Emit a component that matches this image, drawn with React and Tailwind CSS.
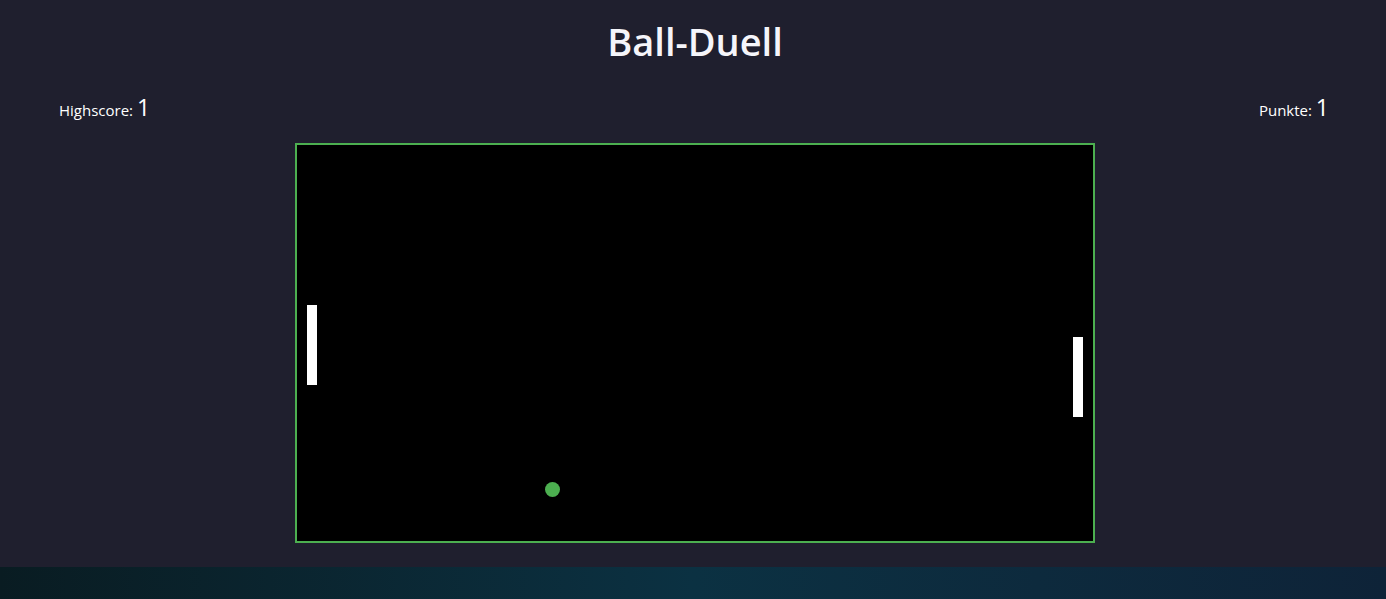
export default function App() {
  return (
    <div className="min-h-[599px] flex flex-col bg-[#1f1f2e]" style={{ fontFamily: '"Open Sans", "Noto Sans", sans-serif' }}>
      <div className="h-[567px] flex flex-col items-center bg-[#1f1f2e] text-white">
        <h1 className="mt-[15px] text-[38px] font-semibold leading-[52px] text-[#f5f5fa] ml-[4px]">Ball-Duell</h1>
        <div className="w-full flex justify-between items-baseline mt-[23px] pl-[59px] pr-[57px]">
          <div className="text-[15px]">Highscore: <span className="text-[23px]">1</span></div>
          <div className="text-[15px]">Punkte: <span className="text-[23px]">1</span></div>
        </div>
        <div className="mt-[18px] ml-[4px] w-[800px] h-[400px] border-2 border-[#4caf50] bg-black relative">
          <div className="absolute left-[10px] top-[160px] w-[10px] h-[80px] bg-white" />
          <div className="absolute left-[776px] top-[192px] w-[10px] h-[80px] bg-white" />
          <div className="absolute left-[248px] top-[337px] w-[15px] h-[15px] rounded-full bg-[#4caf50]" />
        </div>
      </div>
      <div className="flex-1 h-[32px] bg-gradient-to-r from-[#091c22] via-[#0b3142] to-[#0e2338]" />
    </div>
  );
}
